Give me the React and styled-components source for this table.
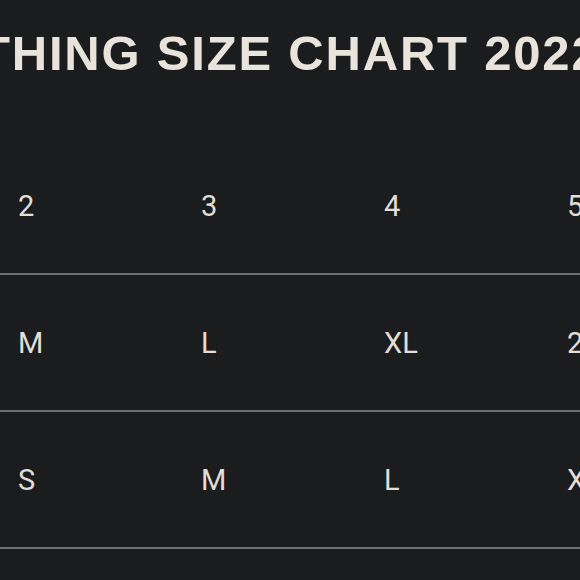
import React from 'react';
import styled, { createGlobalStyle } from 'styled-components';

const GlobalStyle = createGlobalStyle`
    html, body {
        margin: 0;
        padding: 0;
        background: #1b1c1e;
    }
    body {
        width: 580px;
        height: 580px;
        overflow: hidden;
        font-family: Roboto, "Liberation Sans", sans-serif;
    }
`

const Page = styled.div`
    width: 580px;
    height: 580px;
    overflow: hidden;
    background: #1b1c1e;
    color: #e4e0d8;
`

const Title = styled.h1`
    margin: 0;
    height: 138px;
    padding-top: 25px;
    box-sizing: border-box;
    margin-left: -20px;
    font-family: "Liberation Sans", Arial, sans-serif;
    font-size: 49px;
    font-weight: 700;
    letter-spacing: 1.8px;
    white-space: nowrap;
    color: #e8e4dc;
`

const Table = styled.div`
    display: flex;
    flex-direction: column;
    width: 760px;
`

const Row = styled.div`
    display: grid;
    grid-template-columns: repeat(4, 183px);
    align-items: center;
    height: 137px;
    box-sizing: border-box;
    padding-left: 18px;
    border-bottom: 2px solid #6f6f6f;
`

const Cell = styled.div`
    font-size: 29px;
    font-weight: 400;
    color: #e2ded6;
    padding-top: 1px;
`

const rows = [
    ['2', '3', '4', '5'],
    ['M', 'L', 'XL', '2XL'],
    ['S', 'M', 'L', 'XL'],
];

export default function App() {
    return (
        <Page>
            <GlobalStyle />
            <Title>THING SIZE CHART 2022</Title>
            <Table>
                {rows.map((row, i) => (
                    <Row key={i}>
                        {row.map((c, j) => <Cell key={j}>{c}</Cell>)}
                    </Row>
                ))}
            </Table>
        </Page>
    );
}
